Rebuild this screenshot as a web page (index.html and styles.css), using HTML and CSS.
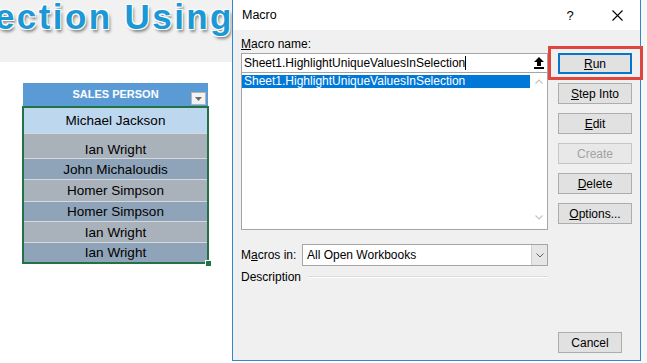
FILE: index.html
```html
<!DOCTYPE html>
<html lang="en">
<head>
    <meta charset="UTF-8">
    <title>Macro</title>
    <link rel="stylesheet" href="styles.css">
</head>
<body>
    <div class="page">
        <div class="sheet">
            <div class="sheet-banner"><span class="banner-title">ection Using</span></div>
            <div class="table">
                <div class="table-head">
                    SALES PERSON
                    <span class="filter-btn">
                        <svg width="7" height="4" viewBox="0 0 7 4"><path d="M0 0h7L3.5 4z" fill="#6d6d6d"/></svg>
                    </span>
                </div>
                <div class="table-body">
                    <div class="row row-sel h25">Michael Jackson</div>
                    <div class="row row-a h25 low">Ian Wright</div>
                    <div class="row row-b h21">John Michaloudis</div>
                    <div class="row row-a h22">Homer Simpson</div>
                    <div class="row row-b h20">Homer Simpson</div>
                    <div class="row row-a h21">Ian Wright</div>
                    <div class="row row-b h20">Ian Wright</div>
                    <span class="fill-handle"></span>
                </div>
            </div>
        </div>

        <div class="dialog">
            <div class="titlebar">
                <span class="title">Macro</span>
                <span class="help">?</span>
                <span class="close">
                    <svg width="11" height="11" viewBox="0 0 11 11"><path d="M0.5 0.5l10 10M10.5 0.5l-10 10" stroke="#000" stroke-width="1.1"/></svg>
                </span>
            </div>
            <div class="dlg-body">
                <div class="dlg-main">
                    <div class="label"><u>M</u>acro name:</div>
                    <div class="name-input">
                        <span class="name-text">Sheet1.HighlightUniqueValuesInSelection<span class="caret"></span></span>
                        <span class="ref-btn">
                            <svg width="10" height="12" viewBox="0 0 10 12"><path d="M5 0L0 5h3v4h4V5h3z" fill="#000"/><rect x="0" y="10" width="10" height="2" fill="#000"/></svg>
                        </span>
                    </div>
                    <div class="macro-list">
                        <div class="list-items">
                            <div class="list-item selected">Sheet1.HighlightUniqueValuesInSelection</div>
                        </div>
                        <div class="scrollbar">
                            <svg width="8" height="5" viewBox="0 0 8 5"><path d="M0.5 4.5L4 1l3.5 3.5" fill="none" stroke="#c4c4c4" stroke-width="1.2"/></svg>
                            <svg width="8" height="5" viewBox="0 0 8 5"><path d="M0.5 0.5L4 4l3.5-3.5" fill="none" stroke="#c4c4c4" stroke-width="1.2"/></svg>
                        </div>
                    </div>
                    <div class="macros-in">
                        <span class="macros-label">M<u>a</u>cros in:</span>
                        <div class="combo">
                            <span class="combo-text">All Open Workbooks</span>
                            <span class="combo-btn">
                                <svg width="8" height="5" viewBox="0 0 8 5"><path d="M0.5 0.5L4 4l3.5-3.5" fill="none" stroke="#606060" stroke-width="1"/></svg>
                            </span>
                        </div>
                    </div>
                    <div class="desc">
                        <span>Description</span>
                        <span class="desc-line"></span>
                    </div>
                </div>
                <div class="dlg-side">
                    <div class="run-wrap">
                        <button class="btn btn-default"><u>R</u>un</button>
                        <span class="callout"></span>
                    </div>
                    <button class="btn"><u>S</u>tep Into</button>
                    <button class="btn"><u>E</u>dit</button>
                    <button class="btn" disabled>Create</button>
                    <button class="btn"><u>D</u>elete</button>
                    <button class="btn"><u>O</u>ptions...</button>
                    <button class="btn btn-cancel">Cancel</button>
                </div>
            </div>
        </div>
        <div class="gutter"></div>
    </div>
</body>
</html>
```

FILE: styles.css
```css
body {
    margin: 0;
    background-color: #fff;
}
.page {
    display: flex;
    width: 647px;
    height: 363px;
    overflow: hidden;
}

/* spreadsheet behind the dialog */
.sheet {
    width: 232px;
    flex: none;
    background-color: #fff;
    font-family: "Liberation Sans", Arial, sans-serif;
}
.sheet-banner {
    height: 62px;
    background-color: #f1f1f1;
    overflow: hidden;
    white-space: nowrap;
}
.banner-title {
    display: block;
    margin-left: -5px;
    font-size: 35px;
    line-height: 34px;
    font-weight: bold;
    letter-spacing: 2.4px;
    color: #1c98d6;
    text-shadow: -1px -1px 0 #fff, 1px -1px 0 #fff, -1px 1px 0 #fff, 1px 1px 0 #fff,
        2px 3px 3px rgba(0,0,0,0.45);
}
.table {
    margin: 21px 0 0 23px;
    width: 185px;
}
.table-head {
    position: relative;
    height: 23px;
    box-sizing: border-box;
    padding-top: 5px;
    background-color: #5b9bd5;
    color: #fff;
    font-weight: bold;
    font-size: 11px;
    text-align: center;
}
.filter-btn {
    position: absolute;
    right: 2px;
    bottom: 1px;
    width: 13px;
    height: 11px;
    background-color: #f3f3f3;
    border: 1px solid #b5b5b5;
    display: flex;
    align-items: center;
    justify-content: center;
}
.table-body {
    position: relative;
    margin-left: -1px;
    width: 187px;
    box-sizing: border-box;
    border: 2px solid #217346;
}
.row {
    display: flex;
    align-items: center;
    justify-content: center;
    box-sizing: border-box;
    border-top: 1px solid #d3d9df;
    font-size: 13.5px;
    color: #000;
}
.row-sel {
    background-color: #bdd7ee;
    border-top: none;
}
.row-a {
    background-color: #a9b1ba;
}
.row-b {
    background-color: #8fa4b9;
}
.row.low {
    align-items: flex-end;
    padding-bottom: 1px;
}
.h25 { height: 25px; }
.h22 { height: 22px; }
.h21 { height: 21px; }
.h20 { height: 20px; }
.fill-handle {
    position: absolute;
    right: -5px;
    bottom: -5px;
    width: 5px;
    height: 5px;
    background-color: #217346;
    border: 1px solid #fff;
}

/* macro dialog */
.dialog {
    flex: none;
    width: 409px;
    height: 361px;
    box-sizing: border-box;
    border: 1px solid #2f86d2;
    border-top: none;
    display: flex;
    flex-direction: column;
    font-family: "Liberation Sans", Arial, sans-serif;
    font-size: 12px;
    color: #000;
}
.titlebar {
    height: 30px;
    flex: none;
    background-color: #fff;
    display: flex;
    align-items: center;
}
.title {
    flex: 1;
    padding-left: 9px;
    font-size: 12.5px;
}
.help {
    width: 30px;
    text-align: center;
    font-size: 13px;
}
.close {
    width: 34px;
    margin-left: 15px;
    margin-right: 6px;
    display: flex;
    justify-content: center;
}
.dlg-body {
    flex: 1;
    display: flex;
    padding-left: 8px;
    background-color: #f0f0f0;
}
.dlg-main {
    width: 307px;
}
.label {
    height: 23px;
    box-sizing: border-box;
    padding-top: 7px;
    line-height: 15px;
}
.name-input {
    height: 19px;
    box-sizing: border-box;
    display: flex;
    align-items: center;
    border: 1px solid #a5a5a5;
    border-bottom: none;
    background-color: #fff;
}
.name-text {
    flex: 1;
    padding-left: 2px;
    display: flex;
    align-items: center;
}
.caret {
    display: inline-block;
    width: 1px;
    height: 14px;
    background-color: #000;
}
.ref-btn {
    width: 16px;
    display: flex;
    justify-content: center;
}
.macro-list {
    height: 158px;
    box-sizing: border-box;
    display: flex;
    border: 1px solid #a5a5a5;
    background-color: #fff;
}
.list-items {
    width: 288px;
    padding-top: 2px;
}
.list-item {
    height: 13px;
    line-height: 13px;
    padding-left: 2px;
}
.list-item.selected {
    background-color: #0078d7;
    color: #fff;
}
.scrollbar {
    flex: 1;
    display: flex;
    flex-direction: column;
    justify-content: space-between;
    align-items: center;
    padding: 6px 0 9px;
}
.macros-in {
    margin-top: 14px;
    height: 22px;
    display: flex;
    align-items: center;
}
.macros-label {
    width: 61px;
}
.combo {
    flex: 1;
    height: 22px;
    box-sizing: border-box;
    display: flex;
    align-items: center;
    border: 1px solid #a5a5a5;
    background-color: #fff;
}
.combo-text {
    flex: 1;
    padding-left: 4px;
}
.combo-btn {
    width: 15px;
    height: 20px;
    display: flex;
    align-items: center;
    justify-content: center;
    background-color: #e6e6e6;
    border-left: 1px solid #cfcfcf;
}
.desc {
    margin-top: 3px;
    height: 15px;
    display: flex;
    align-items: center;
}
.desc-line {
    flex: 1;
    margin-left: 7px;
    border-top: 1px solid #dcdcdc;
    border-bottom: 1px solid #fff;
}
.dlg-side {
    width: 74px;
    margin-left: 10px;
    padding-top: 23px;
    display: flex;
    flex-direction: column;
    gap: 9px;
}
.run-wrap {
    position: relative;
}
.btn {
    display: block;
    width: 74px;
    height: 21px;
    padding: 0;
    box-sizing: border-box;
    font-family: inherit;
    font-size: 12px;
    color: #000;
    background-color: #e1e1e1;
    border: 1px solid #adadad;
}
.btn-default {
    border: 2px solid #0a74c9;
}
.btn:disabled {
    color: #a2a2a2;
    background-color: #e8e8e8;
    border-color: #c5c5c5;
}
.btn-cancel {
    width: 64px;
    margin-top: 99px;
}
.callout {
    position: absolute;
    left: -10px;
    top: -7px;
    width: 95px;
    height: 34px;
    box-sizing: border-box;
    border: 3px solid #e0463d;
    z-index: 2;
}
.gutter {
    flex: 1;
    background-color: #f7f7f7;
}
```
